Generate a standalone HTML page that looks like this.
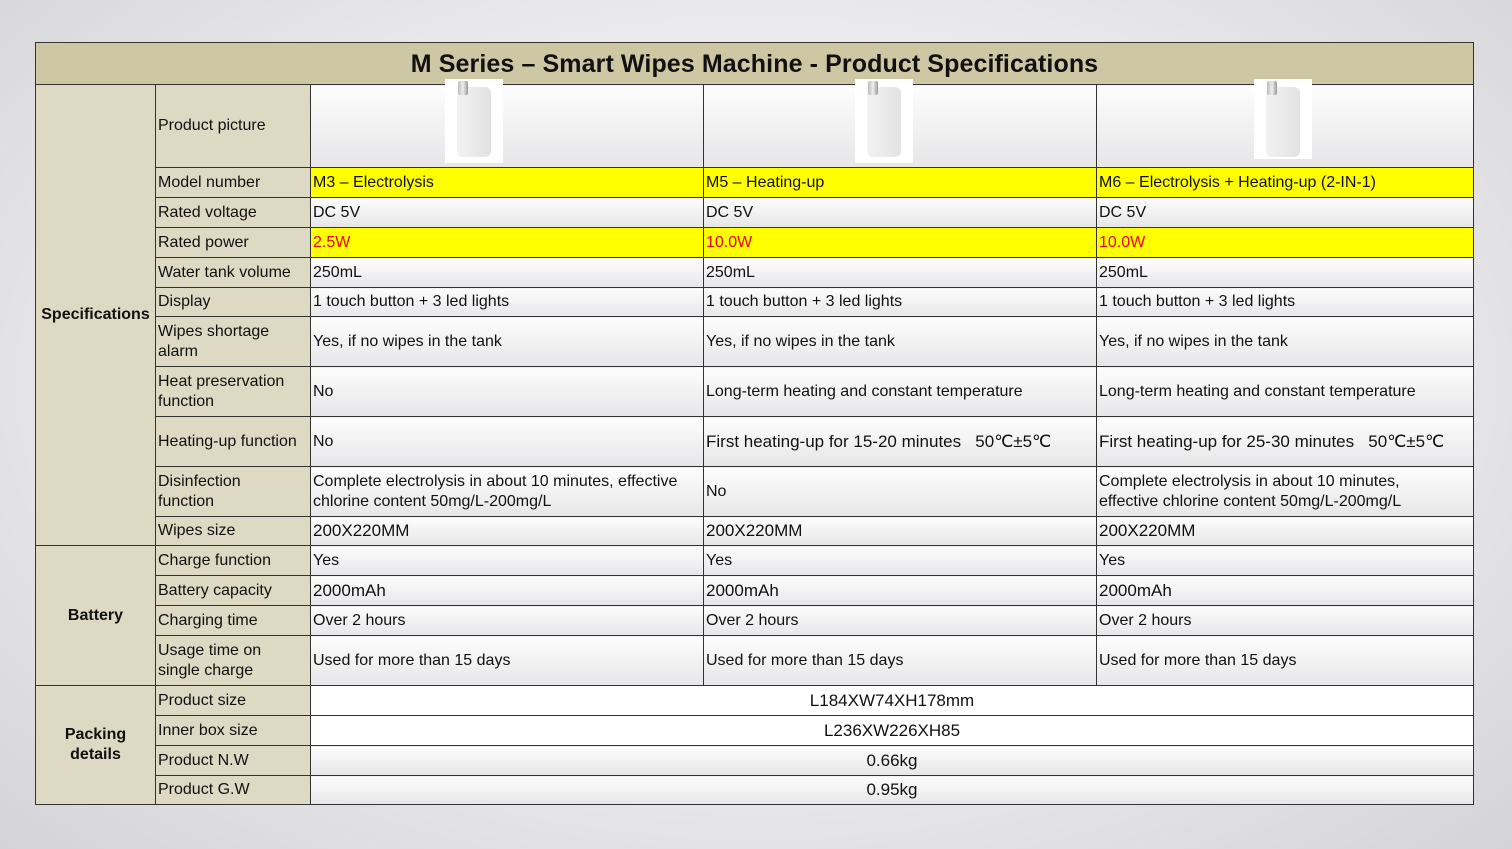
<!DOCTYPE html>
<html><head><meta charset="utf-8"><style>
body{margin:0;width:1512px;height:849px;overflow:hidden;background:radial-gradient(ellipse at 50% 45%,#fafafa 0%,#e8e8ea 60%,#d4d4d8 100%);font-family:"Liberation Sans",sans-serif;position:relative}
table{position:absolute;left:35px;top:42px;width:1438px;border-collapse:collapse;table-layout:fixed}
td{border:1.5px solid #333;padding:0 2px;font-size:16px;color:#111;line-height:20px;background:linear-gradient(#fdfdfd,#e6e6e8);vertical-align:middle;white-space:nowrap}
td.t{background:#cdc7a4;text-align:center;font-weight:bold;font-size:25px;letter-spacing:0.1px;height:41px}
td.l{background:#ddd9c3}
td.g{background:#ddd9c3;text-align:center;font-weight:bold}
td.y{background:#ffff00}
td.r{background:#ffff00;color:#e00}
td.c{text-align:center}
.img{position:absolute;width:58px;height:84px;background:#fff}
.dev{position:absolute;left:12px;top:8px;width:34px;height:70px;border-radius:6px;background:linear-gradient(90deg,#f2f2f2,#e2e2e2)}
.cap{position:absolute;left:13px;top:2px;width:10px;height:14px;background:linear-gradient(90deg,#bbb,#eee,#999);border-radius:2px}
</style></head><body>
<table>
<colgroup><col style="width:120px"><col style="width:155px"><col style="width:393px"><col style="width:393px"><col style="width:377px"></colgroup>
<tr><td class="t" colspan="5">M Series – Smart Wipes Machine - Product Specifications</td></tr>
<tr style="height:83px"><td class="g" rowspan="11">Specifications</td><td class="l">Product picture</td><td></td><td></td><td></td></tr>
<tr style="height:30px"><td class="l">Model number</td><td class="y">M3 – Electrolysis</td><td class="y">M5 – Heating-up</td><td class="y">M6 – Electrolysis + Heating-up (2-IN-1)</td></tr>
<tr style="height:30px"><td class="l">Rated voltage</td><td>DC 5V</td><td>DC 5V</td><td>DC 5V</td></tr>
<tr style="height:30px"><td class="l">Rated power</td><td class="r">2.5W</td><td class="r">10.0W</td><td class="r">10.0W</td></tr>
<tr style="height:30px"><td class="l">Water tank volume</td><td>250mL</td><td>250mL</td><td>250mL</td></tr>
<tr style="height:29px"><td class="l">Display</td><td>1 touch button + 3 led lights</td><td>1 touch button + 3 led lights</td><td>1 touch button + 3 led lights</td></tr>
<tr style="height:50px"><td class="l">Wipes shortage<br>alarm</td><td>Yes, if no wipes in the tank</td><td>Yes, if no wipes in the tank</td><td>Yes, if no wipes in the tank</td></tr>
<tr style="height:50px"><td class="l">Heat preservation<br>function</td><td>No</td><td>Long-term heating and constant temperature</td><td>Long-term heating and constant temperature</td></tr>
<tr style="height:50px"><td class="l">Heating-up function</td><td>No</td><td style="font-size:17px">First heating-up for 15-20 minutes &nbsp;&nbsp;50℃±5℃</td><td style="font-size:17px">First heating-up for 25-30 minutes &nbsp;&nbsp;50℃±5℃</td></tr>
<tr style="height:50px"><td class="l">Disinfection<br>function</td><td>Complete electrolysis in about 10 minutes, effective<br>chlorine content 50mg/L-200mg/L</td><td>No</td><td>Complete electrolysis in about 10 minutes,<br>effective chlorine content 50mg/L-200mg/L</td></tr>
<tr style="height:29px"><td class="l">Wipes size</td><td style="font-size:17px">200X220MM</td><td style="font-size:17px">200X220MM</td><td style="font-size:17px">200X220MM</td></tr>
<tr style="height:30px"><td class="g" rowspan="4">Battery</td><td class="l">Charge function</td><td>Yes</td><td>Yes</td><td>Yes</td></tr>
<tr style="height:30px"><td class="l">Battery capacity</td><td style="font-size:17px">2000mAh</td><td style="font-size:17px">2000mAh</td><td style="font-size:17px">2000mAh</td></tr>
<tr style="height:30px"><td class="l">Charging time</td><td>Over 2 hours</td><td>Over 2 hours</td><td>Over 2 hours</td></tr>
<tr style="height:50px"><td class="l">Usage time on<br>single charge</td><td>Used for more than 15 days</td><td>Used for more than 15 days</td><td>Used for more than 15 days</td></tr>
<tr style="height:30px"><td class="g" rowspan="4">Packing<br>details</td><td class="l">Product size</td><td class="c" colspan="3" style="background:#fff;font-size:17px">L184XW74XH178mm</td></tr>
<tr style="height:30px"><td class="l">Inner box size</td><td class="c" colspan="3" style="background:#fff;font-size:17px">L236XW226XH85</td></tr>
<tr style="height:30px"><td class="l">Product N.W</td><td class="c" colspan="3" style="font-size:17px">0.66kg</td></tr>
<tr style="height:29px"><td class="l">Product G.W</td><td class="c" colspan="3" style="font-size:17px">0.95kg</td></tr>
</table>
<div class="img" style="left:445px;top:79px"><div class="dev"></div><div class="cap"></div></div>
<div class="img" style="left:855px;top:79px"><div class="dev"></div><div class="cap"></div></div>
<div class="img" style="left:1254px;top:79px;height:80px"><div class="dev"></div><div class="cap"></div></div>
</body></html>
